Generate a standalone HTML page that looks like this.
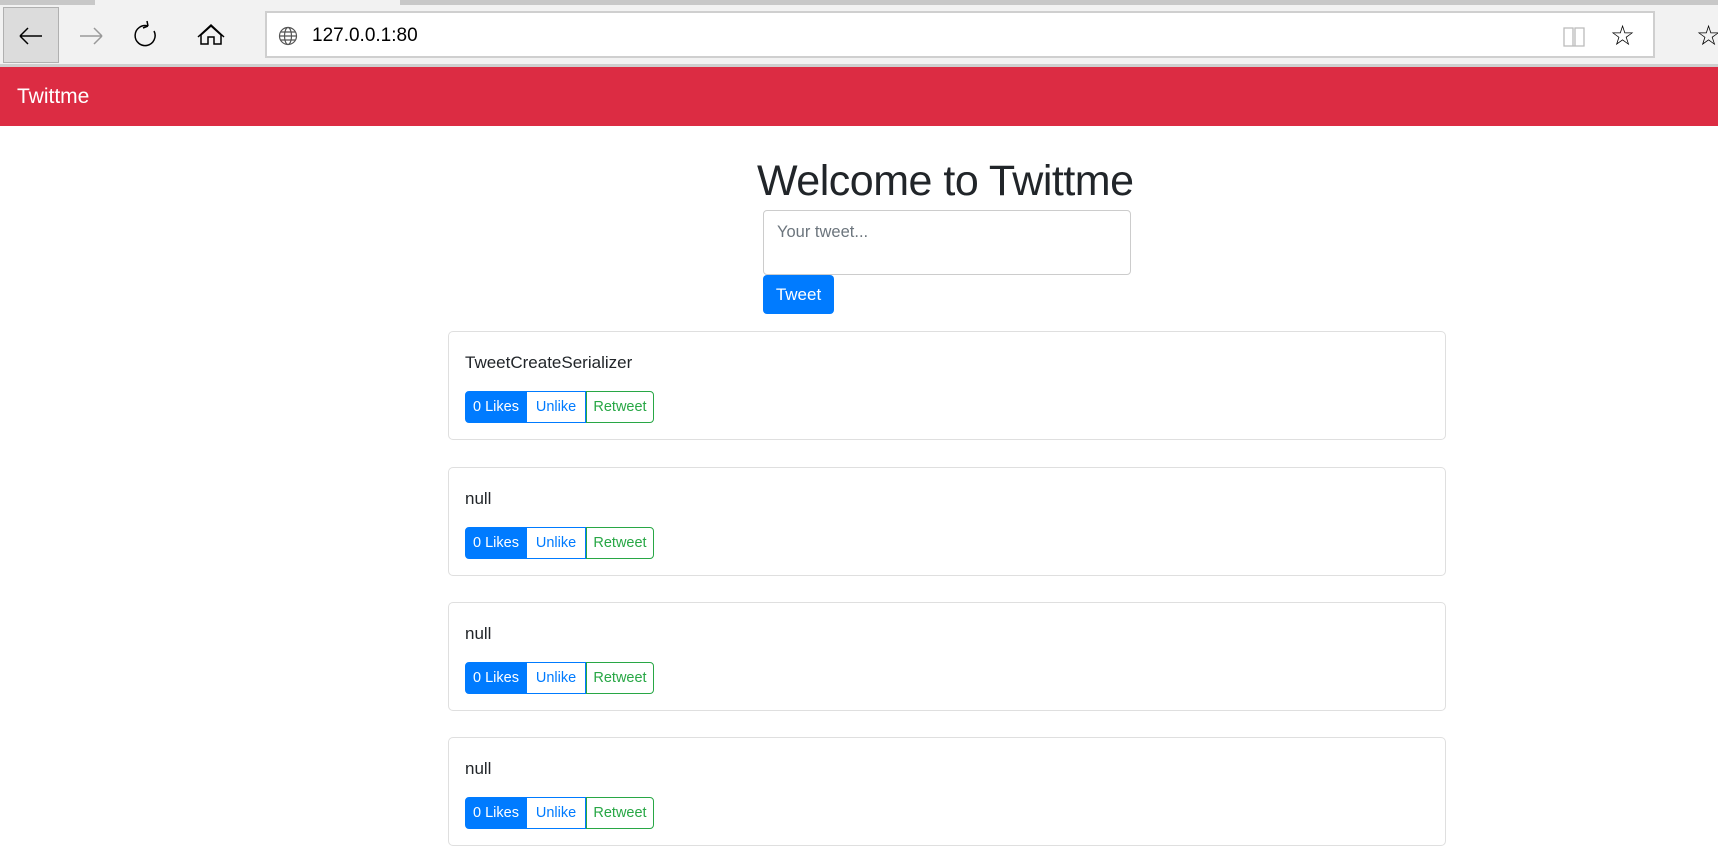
<!DOCTYPE html>
<html><head><meta charset="utf-8"><style>
*{box-sizing:border-box;margin:0;padding:0}
body{width:1718px;height:845px;overflow:hidden;background:#fff;font-family:"Liberation Sans",sans-serif;position:relative;color:#212529}
.a{position:absolute}
.card{position:absolute;left:448px;width:998px;height:109px;border:1px solid #dfdfdf;border-radius:5px}
.card .t{position:absolute;left:16px;top:21px;font-size:17px}
.bg{position:absolute;left:16px;top:59px;height:32px;display:flex;font-size:14.5px}
.bg div{height:32px;line-height:30px;text-align:center;border:1px solid}
.b1{width:62px;background:#007bff;color:#fff;border-color:#007bff!important;border-radius:4px 0 0 4px}
.b2{width:59px;color:#007bff;border-color:#007bff!important;border-left:none!important}
.b3{width:68px;color:#28a745;border-color:#28a745!important;border-left:1px solid #28a745;border-radius:0 4px 4px 0}
</style></head><body>
<div class="a" style="left:0;top:0;width:1718px;height:5px;background:#c8c8c8"></div>
<div class="a" style="left:95px;top:0;width:305px;height:5px;background:#f2f2f2"></div>
<div class="a" style="left:0;top:5px;width:1718px;height:60px;background:#f2f2f2"></div>
<div class="a" style="left:0;top:64px;width:1718px;height:3px;background:#cfcfcf"></div>
<div class="a" style="left:3px;top:7px;width:56px;height:56px;background:#dcdcdc;border:1px solid #b0b0b0"></div>
<svg class="a" style="left:0;top:0" width="260" height="66" fill="none" stroke-width="1.5">
<path d="M20 36h22M20 36l8-8M20 36l8 8" stroke="#000"/>
<path d="M80 36h22M102 36l-8-8M102 36l-8 8" stroke="#999"/>
<path d="M154 31a10 10 0 1 1-6-5M148 26l-5 2M148 26l-1-5" stroke="#000"/>
<path d="M201 44v-9l10-9 10 9v9h-7v-7h-6v7zM198 37l13-12 13 12" stroke="#000"/>
</svg>
<div class="a" style="left:265px;top:11px;width:1390px;height:47px;background:#fff;border:2px solid #cfcfcf"></div>
<svg class="a" style="left:278px;top:26px" width="20" height="20" fill="none" stroke="#555" stroke-width="1.2"><circle cx="10" cy="10" r="8.5"/><ellipse cx="10" cy="10" rx="3.5" ry="8.5"/><path d="M1.5 10h17M3 6h14M3 14h14"/></svg>
<div class="a" style="left:312px;top:25px;font-size:19px;color:#000">127.0.0.1:80</div>
<svg class="a" style="left:1562px;top:25px" width="24" height="24" fill="none" stroke="#bbb" stroke-width="1.3"><path d="M2 3h9v18H2zM13 3h9v18h-9zM11 21h2"/></svg>
<div class="a" style="left:1610px;top:19px;font-size:28px;color:#000">☆</div>
<div class="a" style="left:1696px;top:19px;font-size:28px;color:#000">☆</div>
<div class="a" style="left:0;top:67px;width:1718px;height:59px;background:#dc2c43"></div>
<div class="a" style="left:17px;top:85px;font-size:21px;color:#fff">Twittme</div>
<div class="a" style="left:757px;top:157px;font-size:43px;color:#212529;letter-spacing:-0.5px">Welcome to Twittme</div>
<div class="a" style="left:763px;top:210px;width:368px;height:65px;border:1px solid #ccc;border-radius:4px"></div>
<div class="a" style="left:777px;top:223px;font-size:16.5px;color:#6c757d">Your tweet...</div>
<div class="a" style="left:763px;top:275px;width:71px;height:39px;background:#007bff;border-radius:4px;color:#fff;font-size:17px;line-height:39px;text-align:center">Tweet</div>
<div class="card" style="top:331px"><div class="t">TweetCreateSerializer</div><div class="bg"><div class="b1">0 Likes</div><div class="b2">Unlike</div><div class="b3">Retweet</div></div></div>
<div class="card" style="top:467px"><div class="t">null</div><div class="bg"><div class="b1">0 Likes</div><div class="b2">Unlike</div><div class="b3">Retweet</div></div></div>
<div class="card" style="top:602px"><div class="t">null</div><div class="bg"><div class="b1">0 Likes</div><div class="b2">Unlike</div><div class="b3">Retweet</div></div></div>
<div class="card" style="top:737px"><div class="t">null</div><div class="bg"><div class="b1">0 Likes</div><div class="b2">Unlike</div><div class="b3">Retweet</div></div></div>
</body></html>
